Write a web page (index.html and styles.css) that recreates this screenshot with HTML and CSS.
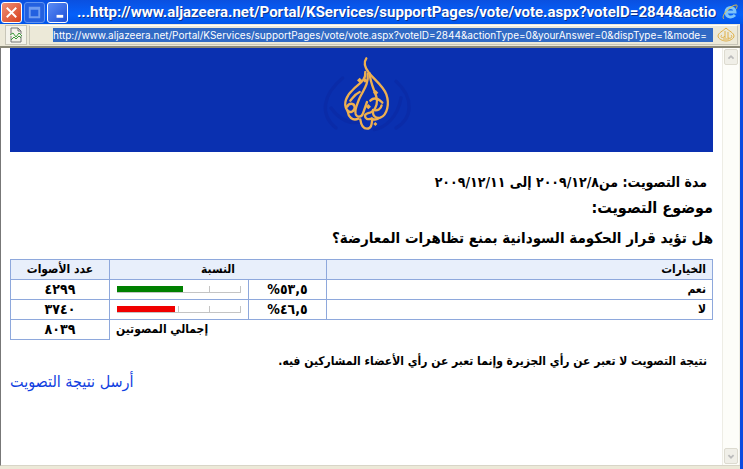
FILE: index.html
```html
<!DOCTYPE html>
<html lang="ar" dir="rtl">

<head>
    <meta charset="UTF-8">
    <meta name="viewport" content="width=device-width, initial-scale=1.0">
    <title>نتيجة التصويت</title>
    <link rel="stylesheet" href="styles.css">
</head>

<body>
    <div class="window">
        <div class="titlebar" dir="ltr">
            <button class="win-btn close" type="button" aria-label="Close">
                <svg viewBox="0 0 20 20"><path d="M5 5l10 10M15 5L5 15" /></svg>
            </button>
            <button class="win-btn max" type="button" aria-label="Maximize" disabled>
                <svg viewBox="0 0 20 20"><path d="M5 5h10v10H5zM5 6h10" /></svg>
            </button>
            <button class="win-btn min" type="button" aria-label="Minimize">
                <svg viewBox="0 0 20 20"><path d="M9 14h7" /></svg>
            </button>
            <span class="caption">...http://www.aljazeera.net/Portal/KServices/supportPages/vote/vote.aspx?voteID=2844&amp;actio</span>
            <svg class="ie" viewBox="0 0 16 16">
                <path class="ie-e" d="M4 8h9c0-6-9-6-9 0 0 6 6 6 9 3" />
                <path class="ie-ring" d="M2 15C-2 12 9 1 14 1c2 0 1 2 0 4" />
            </svg>
        </div>

        <div class="addressbar" dir="ltr">
            <button class="page-btn" type="button" aria-label="Compatibility View">
                <svg viewBox="0 0 16 16">
                    <path class="sheet" d="M3 7V1h7l3 3v3M3 9v6h10V9M10 1v3h3" />
                    <path class="tear" d="M2 8l3-2 3 4 3-4 3 3M3 13l3-3 2 2 3-3 2 2" />
                </svg>
            </button>
            <div class="field">
                <input class="url" type="text" aria-label="Address" value="http://www.aljazeera.net/Portal/KServices/supportPages/vote/vote.aspx?voteID=2844&amp;actionType=0&amp;yourAnswer=0&amp;dispType=1&amp;mode=">
                <svg class="favicon" viewBox="0 0 18 16">
                    <path d="M9 1c-3 3-8 5-8 8s5 5 8 5 8-2 8-5-5-5-8-8M5 8c-3 2 1 4 3 1M8 4v7M11 5v6c3 1 5-1 3-3M6 12h6" />
                </svg>
            </div>
        </div>

        <div class="view" dir="ltr">
            <main class="page" dir="rtl">
                <header class="banner">
                    <svg class="logo" viewBox="-12 0 330 312" role="img" aria-label="الجزيرة">
                        <g class="logo-shade">
                            <path d="M95 90c-60 50-70 110-20 150M255 100c55 50 50 110 0 140" />
                            <path d="M60 180c30 40 60 50 90 40M270 150c-10 60-50 90-80 95" />
                        </g>
                        <!-- outer drop -->
                        <path d="M166 31c-10 14-3 30 8 44 18 22 42 38 52 64 10 28 3 62-18 70-14 4-24-6-22-22" />
                        <path d="M163 72c2 28-22 36-38 54-20 18-28 42-18 58 8 14 24 8 24-6s-18-14-22-2" />
                        <!-- letters -->
                        <path d="M170 78c4 32-16 52-26 76-6 18-14 30-10 44 4 12 18 10 22-2l12-34" />
                        <path d="M110 190c2 16 14 30 32 22M148 214c2 16 8 28 20 28 14 0 14-14 16-30 6 4 14 2 20-2" />
                        <path d="M176 76c2 30 14 50 20 70 4 14 2 34-12 44-10 8-22 4-22 14 0 8 8 12 20 8" />
                        <path d="M178 158c12-12 24-6 36 6M186 186c14 4 24-4 26-14M118 158c10-12 14-20 28-26" />
                        <path class="logo-dots" d="M138 97l8-8 8 8-8 8zM155 97l7-7 7 7-7 7zM186 134l8-8 8 8-8 8zM164 176l8-8 8 8-8 8zM187 228l6-6 6 6-6 6z" />
                    </svg>
                </header>
                <p class="period">مدة التصويت: من٢٠٠٩/١٢/٨ إلى ٢٠٠٩/١٢/١١</p>
                <h1>موضوع التصويت:</h1>
                <h2>هل تؤيد قرار الحكومة السودانية بمنع تظاهرات المعارضة؟</h2>

                <table class="results">
                    <colgroup>
                        <col>
                        <col class="col-percent">
                        <col class="col-graph">
                        <col class="col-votes">
                    </colgroup>
                    <thead>
                        <tr>
                            <th class="choice" scope="col">الخيارات</th>
                            <th colspan="2" scope="col">النسبة</th>
                            <th scope="col">عدد الأصوات</th>
                        </tr>
                    </thead>
                    <tbody>
                        <tr>
                            <td class="choice">نعم</td>
                            <td class="number">٥٣,٥%</td>
                            <td class="graph">
                                <div class="bar"><i class="fill yes" style="width: 53.5%"></i></div>
                            </td>
                            <td class="number">٤٢٩٩</td>
                        </tr>
                        <tr>
                            <td class="choice">لا</td>
                            <td class="number">٤٦,٥%</td>
                            <td class="graph">
                                <div class="bar"><i class="fill no" style="width: 46.5%"></i></div>
                            </td>
                            <td class="number">٣٧٤٠</td>
                        </tr>
                    </tbody>
                    <tfoot>
                        <tr>
                            <td class="total" colspan="3">إجمالي المصوتين</td>
                            <td class="number">٨٠٣٩</td>
                        </tr>
                    </tfoot>
                </table>

                <p class="note">نتيجة التصويت لا تعبر عن رأي الجزيرة وإنما تعبر عن رأي الأعضاء المشاركين فيه.</p>
                <a class="send" href="#">أرسل نتيجة التصويت</a>
            </main>
            <div class="scrollbar">
                <button type="button" aria-label="Up"><svg viewBox="0 0 14 14"><path d="M4 9l3-3 3 3" /></svg></button>
                <button type="button" aria-label="Down"><svg viewBox="0 0 14 14"><path d="M4 6l3 3 3-3" /></svg></button>
            </div>
        </div>
    </div>
</body>

</html>
```
FILE: styles.css
```css
* {
    box-sizing: border-box;
    padding: 0;
    margin: 0;
}

body {
    font-family: "DejaVu Sans Condensed", "DejaVu Sans", sans-serif;
    font-size: 12px;
    color: #000;
}

button {
    border: none;
    background: none;
}

svg {
    display: block;
    fill: none;
}

.window {
    min-height: 100vh;
    display: flex;
    flex-direction: column;
    background: #ece9d8;
    border-right: 3px solid #0a4be0;
}

/* title bar */
.titlebar {
    height: 24px;
    display: flex;
    align-items: center;
    gap: 2px;
    padding-left: 1px;
    background: linear-gradient(#0a50e0, #0560fa 60%, #0055ea);
    margin-right: -3px;
}

.win-btn {
    width: 21px;
    height: 21px;
    border: 1px solid #fff;
    border-radius: 3px;
    background: linear-gradient(135deg, #5b8cf5, #1c50d8);
    flex: none;
}

.win-btn path {
    stroke: #fff;
    stroke-width: 2;
}

.win-btn.close {
    background: linear-gradient(135deg, #ee9078, #d8401c);
}

.win-btn.max {
    border-color: #5f92f0;
    background: #2360e0;
}

.win-btn.max path {
    stroke: #6f9cf0;
}

.win-btn.min path {
    stroke-width: 3;
}

.caption {
    flex: 1;
    min-width: 0;
    margin-left: 7px;
    overflow: hidden;
    white-space: nowrap;
    font: bold 15px/20px Roboto, sans-serif;
    color: #fff;
    text-shadow: 1px 1px #0a3090;
}

.ie {
    width: 16px;
    height: 16px;
    margin-right: 5px;
    flex: none;
}

.ie-e {
    stroke: #7cc4fa;
    stroke-width: 3;
}

.ie-ring {
    stroke: #e8c040;
}

/* address bar */
.addressbar {
    height: 24px;
    display: flex;
    padding: 1px 2px 1px 5px;
    gap: 2px;
    border-bottom: 2px solid #8a8877;
}

.page-btn {
    width: 22px;
    display: grid;
    place-items: center;
    border: 1px solid #c8c6b8;
    background: #f4f3ea;
}

.page-btn svg {
    width: 16px;
    height: 16px;
}

.sheet {
    stroke: #777;
}

.tear {
    stroke: #3c9a3c;
}

.field {
    flex: 1;
    display: flex;
    align-items: center;
    padding-left: 23px;
    border: 1px solid #c8c6b8;
    border-top-color: #fff;
}

.url {
    flex: 1;
    min-width: 0;
    height: 14px;
    border: none;
    background: #316ac5;
    color: #fff;
    font: 10px/14px Inter, sans-serif;
}

.favicon {
    width: 18px;
    height: 16px;
    margin: 0 2px 0 4px;
    stroke: #e0b048;
}

/* page */
.view {
    flex: 1;
    display: flex;
    margin-bottom: 3px;
    border-left: 1px solid #777;
    border-bottom: 1px solid #d8d5c8;
    background: #fff;
}

.page {
    flex: 1;
    padding: 0 9px;
}

.banner {
    height: 104px;
    display: grid;
    place-items: center;
    background: #0a30b0;
}

.logo {
    width: 110px;
    height: 104px;
    stroke: #eeb050;
    stroke-width: 7;
    stroke-linecap: round;
}

.logo-shade {
    stroke: #0a2ba8;
    stroke-width: 10;
}

.logo-dots {
    fill: #eeb050;
    stroke: none;
}

.period {
    margin-top: 20px;
    padding-right: 6px;
    font-size: 14px;
    line-height: 20px;
    font-weight: bold;
}

h1,
h2 {
    margin-top: 2px;
    line-height: 28px;
}

h1 {
    font-size: 16px;
}

h2 {
    font-size: 15px;
}

.results {
    width: 100%;
    margin-top: 7px;
    table-layout: fixed;
    border-collapse: collapse;
    text-align: center;
    font-weight: bold;
    line-height: 19px;
}

.col-percent {
    width: 78px;
}

.col-graph {
    width: 139px;
}

.col-votes {
    width: 99px;
}

.results th,
.results td {
    height: 20px;
    border: 1px solid #8ea8dc;
}

.results thead {
    background: #e8effb;
}

.results .choice {
    padding-right: 6px;
    text-align: right;
}

.results .number {
    font-size: 14px;
}

.results .graph {
    padding: 0 7px;
}

.results .total {
    padding-left: 6px;
    border: none;
    text-align: left;
}

.bar {
    height: 7px;
    direction: ltr;
    border-bottom: 1px solid #c4c4c4;
    background: repeating-linear-gradient(90deg, transparent 0 calc(25% - 1px), #c4c4c4 calc(25% - 1px) 25%);
}

.fill {
    display: block;
    height: 6px;
}

.yes {
    background: #008000;
}

.no {
    background: #f00000;
}

.note {
    margin-top: 10px;
    padding-right: 6px;
    line-height: 22px;
    font-weight: bold;
}

.send {
    display: block;
    text-align: left;
    font-size: 16px;
    line-height: 20px;
    color: #1040e0;
    text-decoration: none;
}

/* scrollbar */
.scrollbar {
    width: 18px;
    display: flex;
    flex-direction: column;
    justify-content: space-between;
    padding: 1px;
    border-left: 1px solid #eeede5;
    border-right: 1px solid #eeede5;
    background: #fdfdf9;
}

.scrollbar button {
    height: 16px;
    border: 1px solid #dddbd0;
    border-radius: 2px;
    background: #f0efe8;
}

.scrollbar path {
    stroke: #bbb;
    stroke-width: 2;
}
```
